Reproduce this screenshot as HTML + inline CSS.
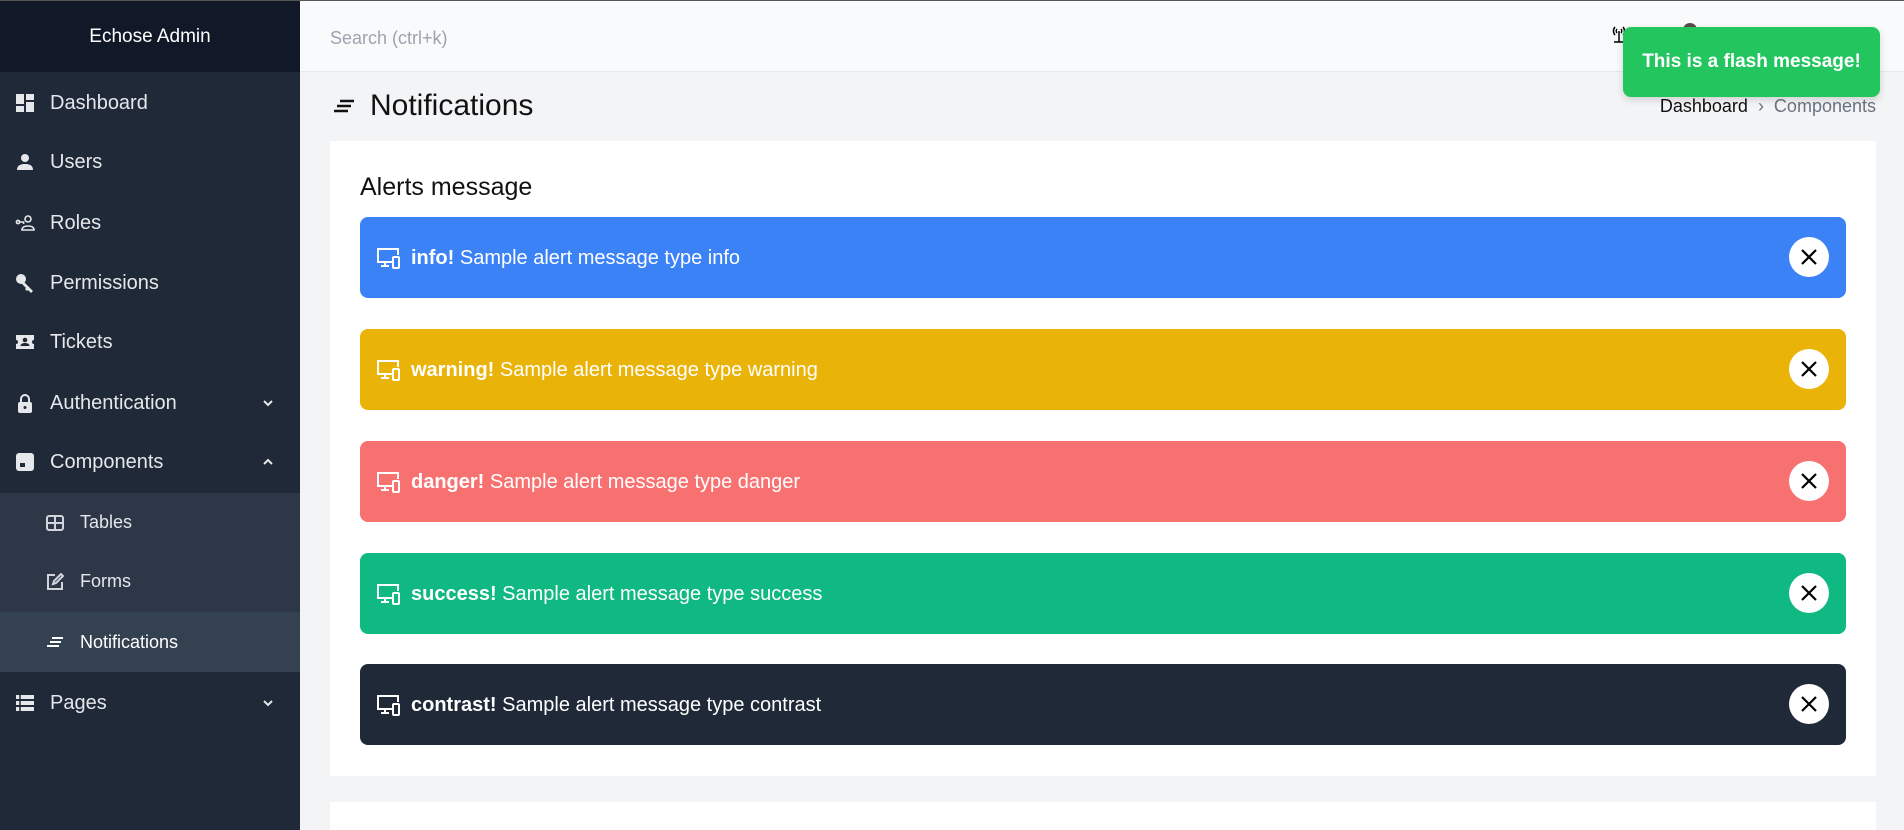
<!DOCTYPE html>
<html><head><meta charset="utf-8"><style>
*{box-sizing:border-box;margin:0;padding:0}
html,body{width:1904px;height:830px;overflow:hidden}
body{background:#f3f4f6;font-family:"Liberation Sans",sans-serif;position:relative;border-top:1px solid #555}
.sb{position:absolute;left:0;top:0;width:300px;height:830px;background:#1f2937;color:#e5e7eb}
.brand{height:71px;background:#111827;color:#fff;font-size:19px;text-align:center;line-height:72px}
.it{position:absolute;left:0;width:300px;height:60px;display:flex;align-items:center;font-size:20px;color:#e5e7eb}
.it svg{position:absolute;left:15px;width:20px;height:20px;fill:#e5e7eb}
.it span{position:absolute;left:50px}
.it .ch{position:absolute;left:262px;width:12px;height:12px;fill:none;stroke:#e5e7eb;stroke-width:2}
.sub{position:absolute;left:0;top:492px;width:300px;height:179px;background:#2d3748}
.si{position:absolute;left:0;width:300px;height:59px;font-size:18px;display:flex;align-items:center;color:#e5e7eb}
.si svg{position:absolute;left:46px;width:18px;height:18px}
.si span{position:absolute;left:80px}
.hdr{position:absolute;left:300px;top:0;right:0;height:71px;background:#f9fafb;border-bottom:1px solid #e5e7eb}
.search{position:absolute;left:30px;top:27px;font-size:18px;color:#9ca3af}
.title{position:absolute;left:370px;top:88px;font-size:30px;color:#111}
.bc{position:absolute;right:28px;top:95px;font-size:18px;color:#111}
.bc .g{color:#6b7280}
.card{position:absolute;left:330px;width:1546px;background:#fff}
.al{position:absolute;left:360px;width:1486px;height:81px;border-radius:8px;color:#fff;font-size:20px}
.al svg.i{position:absolute;left:16px;top:30px;width:25px;height:22px}
.al .t{position:absolute;left:51px;top:30px}
.al .x{position:absolute;right:17px;top:20px;width:40px;height:40px;border-radius:50%;background:#fff}
.al .x svg{position:absolute;left:11px;top:11px;width:18px;height:18px;stroke:#000;stroke-width:2.2}
.flash{position:absolute;left:1623px;top:26px;width:257px;height:70px;background:#22c55e;border-radius:8px;color:#fff;font-weight:bold;font-size:19px;text-align:center;line-height:70px;box-shadow:0 3px 8px rgba(0,0,0,.15)}
</style></head><body>
<div class="sb">
<div class="brand">Echose Admin</div>
<div class="it" style="top:72px"><svg viewBox="0 0 20 20"><rect x="1" y="1" width="8" height="10"/><rect x="11" y="1" width="8" height="6"/><rect x="1" y="13" width="8" height="6"/><rect x="11" y="9" width="8" height="10"/></svg><span>Dashboard</span></div>
<div class="it" style="top:131px"><svg viewBox="0 0 20 20"><circle cx="10" cy="6" r="4"/><path d="M2 18c0-5 4-6 8-6s8 1 8 6z"/></svg><span>Users</span></div>
<div class="it" style="top:192px"><svg viewBox="0 0 20 20" style="fill:none;stroke:#e5e7eb;stroke-width:1.6"><circle cx="3" cy="9" r="1.6"/><path d="M4.6 9h4v2"/><circle cx="13" cy="6" r="3"/><path d="M7 17c0-3 3-4 6-4s6 1 6 4z"/></svg><span>Roles</span></div>
<div class="it" style="top:252px"><svg viewBox="0 0 20 20"><circle cx="6" cy="6" r="5"/><path d="M8 8l10 10-2 2-3-3-1 1-2-2 1-1-4-4z"/></svg><span>Permissions</span></div>
<div class="it" style="top:311px"><svg viewBox="0 0 20 20"><path d="M1 3h18v5a2 2 0 000 4v5H1v-5a2 2 0 000-4z"/><circle cx="10" cy="8" r="2.3" fill="#1f2937"/><path d="M5.5 14c0-2 2-3 4.5-3s4.5 1 4.5 3z" fill="#1f2937"/></svg><span>Tickets</span></div>
<div class="it" style="top:372px"><svg viewBox="0 0 20 20"><path d="M5 9V6a5 5 0 0110 0v3h-2V6a3 3 0 00-6 0v3z"/><rect x="3" y="9" width="14" height="11" rx="2"/><circle cx="10" cy="14.5" r="1.5" fill="#1f2937"/></svg><span>Authentication</span><svg class="ch" viewBox="0 0 12 12"><path d="M2 4l4 4 4-4"/></svg></div>
<div class="it" style="top:431px"><svg viewBox="0 0 20 20"><rect x="1" y="1" width="18" height="18" rx="3"/><rect x="5" y="11" width="5" height="4" fill="#1f2937"/></svg><span>Components</span><svg class="ch" viewBox="0 0 12 12"><path d="M2 8l4-4 4 4"/></svg></div>
<div class="sub">
<div class="si" style="top:0"><svg viewBox="0 0 18 18" fill="none" stroke="#d1d5db" stroke-width="2"><rect x="1" y="2" width="16" height="14" rx="2"/><path d="M1 9h16M9 2v14"/></svg><span>Tables</span></div>
<div class="si" style="top:59px"><svg viewBox="0 0 18 18" fill="none" stroke="#d1d5db" stroke-width="2"><path d="M9 2H2v14h14V9"/><path d="M7 11l1-3 7-7 2 2-7 7z"/></svg><span>Forms</span></div>
<div class="si" style="top:119px;height:60px;background:#344150;color:#fff"><svg viewBox="0 0 18 18" fill="none" stroke="#fff" stroke-width="2"><path d="M6 5h11M4 9h11M1 13h12"/></svg><span>Notifications</span></div>
</div>
<div class="it" style="top:672px"><svg viewBox="0 0 20 20"><rect x="1" y="2" width="18" height="4"/><rect x="1" y="8" width="18" height="4"/><rect x="1" y="14" width="18" height="4"/><path d="M5 2v16" stroke="#1f2937" stroke-width="1.5"/></svg><span>Pages</span><svg class="ch" viewBox="0 0 12 12"><path d="M2 4l4 4 4-4"/></svg></div>
</div>
<div class="hdr"><div class="search">Search (ctrl+k)</div></div>
<svg style="position:absolute;left:1611px;top:23px;width:16px;height:20px" viewBox="0 0 16 20" fill="none" stroke="#000" stroke-width="1.5"><path d="M4 3a6 6 0 000 8M12 3a6 6 0 010 8M6 5a3 3 0 000 4M10 5a3 3 0 010 4M8 7v11M3 18h10"/></svg>
<div style="position:absolute;left:1683px;top:22px;width:14px;height:8px;border-radius:7px 7px 0 0;background:#5a4a48"></div>
<svg style="position:absolute;left:333px;top:98px;width:22px;height:14px" viewBox="0 0 22 14" fill="none" stroke="#111" stroke-width="2.4"><path d="M7 2h14M4 7h14M1 12h14"/></svg>
<div class="title">Notifications</div>
<div class="bc">Dashboard <span class="g">&nbsp;›&nbsp; Components</span></div>
<div class="card" style="top:140px;height:635px"></div>
<div class="card" style="top:801px;height:29px"></div>
<div style="position:absolute;left:360px;top:172px;font-size:25px;color:#111">Alerts message</div>

<div class="al" style="top:216px;background:#3b82f6"><svg class="i" viewBox="0 0 25 22" fill="none" stroke="#fff" stroke-width="2"><path d="M16 15H2V2h20v6"/><path d="M9 15v4M5 19h8"/><rect x="17" y="10" width="6" height="11" rx="1"/></svg><div class="t"><b>info!</b> Sample alert message type info</div><div class="x"><svg viewBox="0 0 18 18"><path d="M2 2l14 14M16 2L2 16"/></svg></div></div>
<div class="al" style="top:328px;background:#eab308"><svg class="i" viewBox="0 0 25 22" fill="none" stroke="#fff" stroke-width="2"><path d="M16 15H2V2h20v6"/><path d="M9 15v4M5 19h8"/><rect x="17" y="10" width="6" height="11" rx="1"/></svg><div class="t"><b>warning!</b> Sample alert message type warning</div><div class="x"><svg viewBox="0 0 18 18"><path d="M2 2l14 14M16 2L2 16"/></svg></div></div>
<div class="al" style="top:440px;background:#f87171"><svg class="i" viewBox="0 0 25 22" fill="none" stroke="#fff" stroke-width="2"><path d="M16 15H2V2h20v6"/><path d="M9 15v4M5 19h8"/><rect x="17" y="10" width="6" height="11" rx="1"/></svg><div class="t"><b>danger!</b> Sample alert message type danger</div><div class="x"><svg viewBox="0 0 18 18"><path d="M2 2l14 14M16 2L2 16"/></svg></div></div>
<div class="al" style="top:552px;background:#10b981"><svg class="i" viewBox="0 0 25 22" fill="none" stroke="#fff" stroke-width="2"><path d="M16 15H2V2h20v6"/><path d="M9 15v4M5 19h8"/><rect x="17" y="10" width="6" height="11" rx="1"/></svg><div class="t"><b>success!</b> Sample alert message type success</div><div class="x"><svg viewBox="0 0 18 18"><path d="M2 2l14 14M16 2L2 16"/></svg></div></div>
<div class="al" style="top:663px;background:#1f2937"><svg class="i" viewBox="0 0 25 22" fill="none" stroke="#fff" stroke-width="2"><path d="M16 15H2V2h20v6"/><path d="M9 15v4M5 19h8"/><rect x="17" y="10" width="6" height="11" rx="1"/></svg><div class="t"><b>contrast!</b> Sample alert message type contrast</div><div class="x"><svg viewBox="0 0 18 18"><path d="M2 2l14 14M16 2L2 16"/></svg></div></div>

<div class="flash">This is a flash message!</div>
</body></html>
